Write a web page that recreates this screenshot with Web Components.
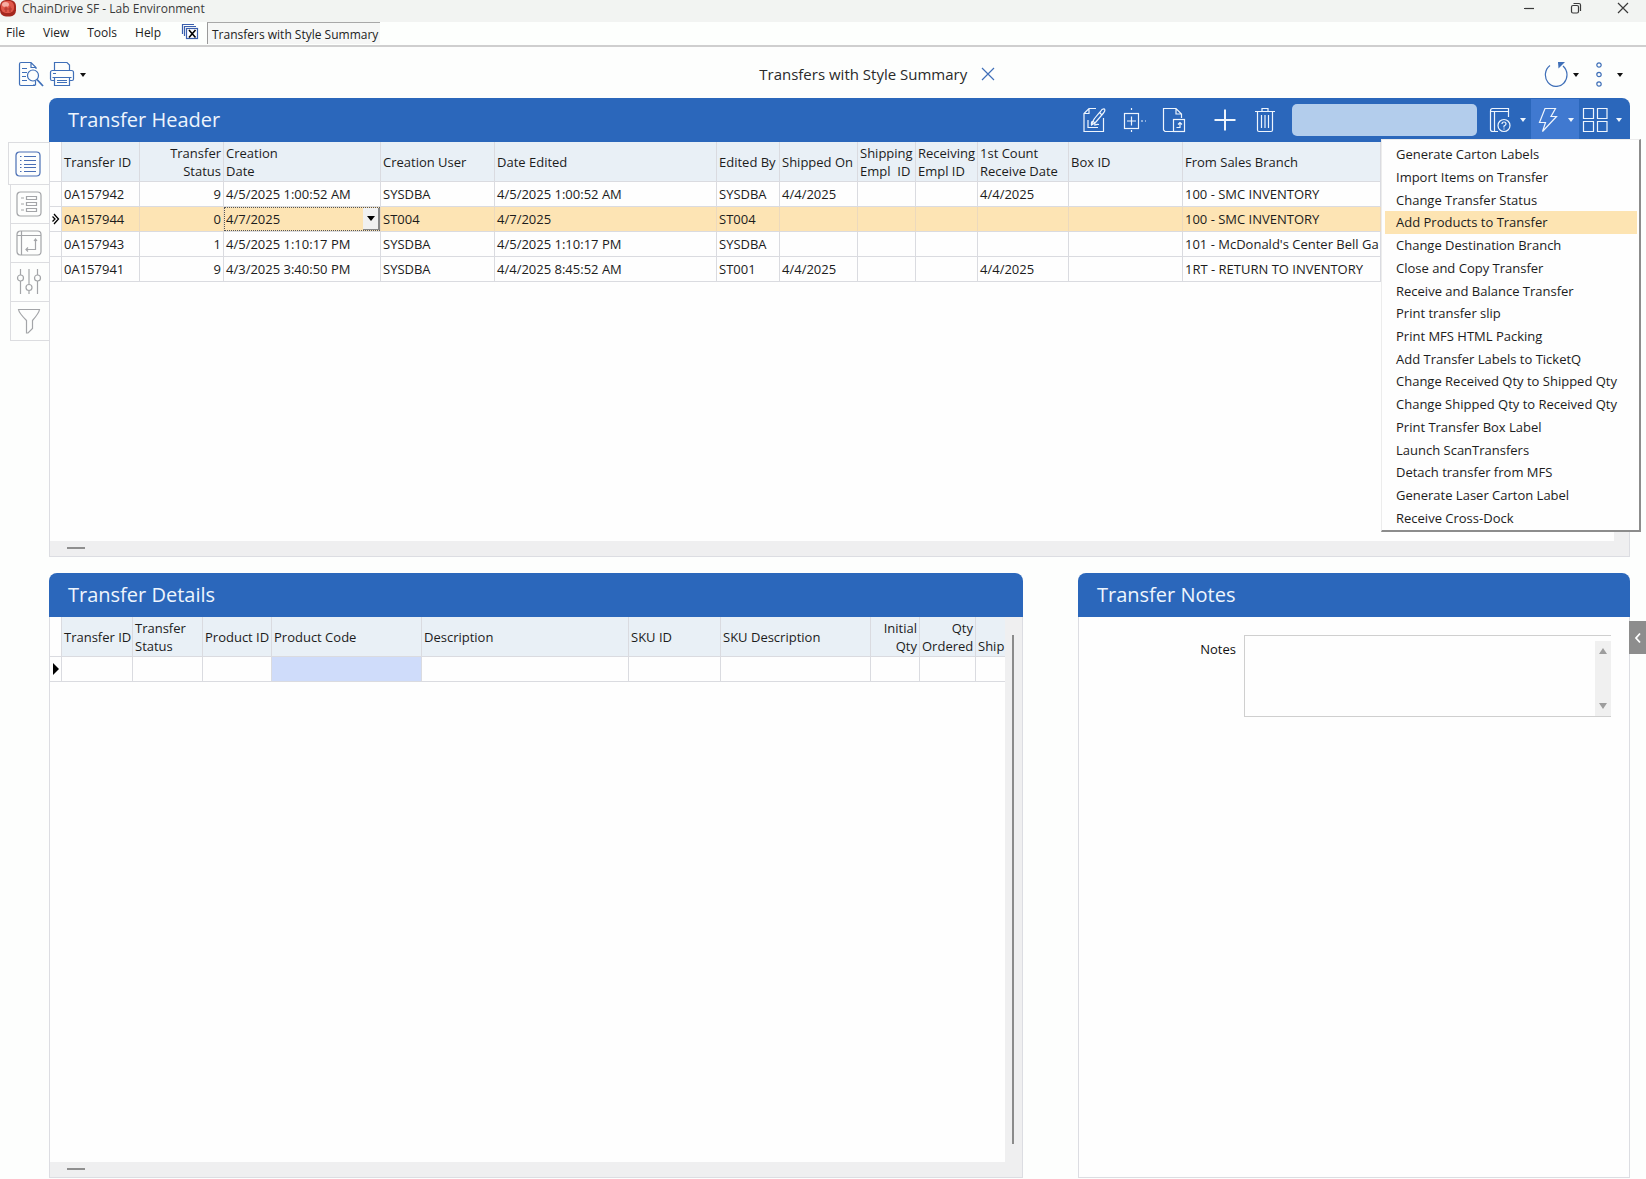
<!DOCTYPE html>
<html lang="en">
<head>
<meta charset="utf-8">
<title>ChainDrive SF - Lab Environment</title>
<style>
  html, body { margin: 0; height: 100%; }
  body { font: 13px/18px "Open Sans", "Noto Sans", sans-serif; color: #1c1c1c; background: #fdfefd; overflow: hidden; }
</style>
</head>
<body>
<chain-app></chain-app>
<script>
const RESET = `
  * { box-sizing: border-box; }
  button, input, textarea, select { font: inherit; color: inherit; margin: 0; border: 0; padding: 0; background: none; border-radius: 0; }
  button, a { cursor: default; }
  svg { display: block; flex: none; }
`;
const define = (name, html, setup) => customElements.define(name, class extends HTMLElement {
  connectedCallback() {
    if (this.shadowRoot) return;
    const t = document.createElement('template');
    t.innerHTML = `<style>${RESET}</style>` + html;
    this.attachShadow({ mode: 'open' }).append(t.content.cloneNode(true));
    if (setup) setup.call(this, this.shadowRoot);
  }
});

/* ---------- icons: [width, height, markup] ---------- */
const ICONS = {
  search: [26, 26, '<path d="M17 24.500H3Q1.500 24.500 1.500 23V3Q1.500 1.500 3 1.500H13L18 6.500V8M13 1.500V6.500H18" /><path d="M4 7.500H9M4 11.500H9M4 15.500H8M4 19.500H9M15 24H17.500V20"/><circle cx="15" cy="14.500" r="5.500"/><path d="M19 18.500L25 25" stroke-width="1.800"/>'],
  print: [26, 26, '<path d="M5.500 9V1.500H18L20.500 4V9M5.500 19.500H3Q1.500 19.500 1.500 18V11.500Q1.500 9.500 3.500 9.500H22.500Q24.500 9.500 24.500 11.500V18Q24.500 19.500 23 19.500H20.500M4 12.500H7"/><path d="M3.500 16.500H22.500M5.500 16.500V24.500H20.500V16.500M8 19.500H18M8 21.500H18"/>'],
  refresh: [24, 26, '<path d="M6 4.500A10.800 11.500 0 1 0 19 5"/><path d="M14 1H21L14.500 7.500Z" fill="currentColor" stroke="none"/>'],
  dots: [8, 26, '<circle cx="4" cy="4" r="2.200"/><circle cx="4" cy="13.500" r="2.200"/><circle cx="4" cy="23" r="2.200"/>'],
  close: [14, 14, '<path d="M1 1L13 13M13 1L1 13"/>'],
  edit: [24, 26, '<path d="M14 1.500H7L2 6.500V24.500H21.500V11M2 6.500H7V1.500M6 13V20.500H16"/><path d="M9.500 18C11 13 12 12 18.500 4.500Q20 1.500 22.500 2Q23.500 4 21.500 6L13.500 15.500L9.500 18Q9 14 11 14.500T13 18Q15 17 17 17.500M17.500 5.500L20 8"/>'],
  addbox: [24, 26, '<rect x="2.500" y="6.500" width="14" height="15"/><path d="M5 14H14M9.500 9.500V18.500"/><path d="M9.500 1V5M9.500 23V26M19 14H24" stroke-dasharray="2 2"/>'],
  doccopy: [24, 26, '<path d="M11 24.500H3L1.500 23V1.500H14L19.500 7V11M14 1.500V7H19.500"/><rect x="11.500" y="12.500" width="11" height="12"/><path d="M14.500 20.500H18V16M16 17.500L18 15.500L20 17.500"/>'],
  plus: [24, 26, '<path d="M12 2.500V23.500M1.500 13H22.500" stroke-width="2"/>'],
  trash: [24, 26, '<path d="M2 4.500H22M9 4V1.500H15V4M4.500 5V23Q4.500 24.500 6 24.500H18Q19.500 24.500 19.500 23V5M8.500 8V21M12 8V21M15.500 8V21"/>'],
  book: [26, 26, '<path d="M19.500 10V1.500H3.500Q1.500 1.500 1.500 4V22.500Q1.500 24.500 4 24.500H9M1.500 4.500H19.500M5.500 5V24M19.500 4.500V10"/><circle cx="15" cy="18.500" r="6"/><path d="M13 17Q13 15 15 15T17 17Q17 18 15 19V20.500M15 21.500V22.500"/>'],
  bolt: [22, 26, '<path d="M8 1.500H18.500L14 9.500H19.500L5.500 24.500L8.500 15.500H2.500Z"/>'],
  tiles: [26, 26, '<path d="M1.500 1.500H11.500V11.500H1.500ZM15.500 1.500H25V11.500H15.500ZM1.500 14.500H11.500V24.500H1.500ZM15.500 14.500H25V24.500H15.500Z"/>'],
  list: [26, 26, '<rect x="1" y="1" width="24" height="24" rx="3.500"/><path d="M9 5.500H21M9 9.500H21M9 13.500H21M9 16.500H21M9 20.500H21M5 5.500H6.500M5 9.500H6.500M5 13.500H6.500M5 16.500H6.500M5 20.500H6.500"/>'],
  form: [26, 26, '<rect x="1" y="1" width="24" height="24" rx="3.500"/><path d="M10.500 5.500H20.500V8.500H10.500ZM10.500 11.500H20.500V14.500H10.500ZM10.500 17.500H20.500V20.500H10.500ZM5 7H8M5 13H8M5 19H8"/>'],
  pivot: [26, 26, '<rect x="1" y="1" width="24" height="24" rx="3.500"/><path d="M1 5.500H25M5.500 1V25M10 19.500H19.500V9M18 11L19.500 9L21 11M12 17.500L10 19.500L12 21.500"/>'],
  sliders: [26, 26, '<path d="M4.500 0V6M4.500 12V25M13 0V15.500M13 21.500V25M21.500 0V6M21.500 12V25"/><circle cx="4.500" cy="9" r="3"/><circle cx="13" cy="18.500" r="3"/><circle cx="21.500" cy="9" r="3"/>'],
  funnel: [26, 26, '<path d="M2.500 1.500H23.500Q23 5 16.500 12.500V20.500L12 25H10.500V12.500Q3 5 2.500 1.500Z"/>'],
  windows: [18, 18, '<path d="M13 1.500H1.500V11M15 3.500H3.500V13" stroke="#3a5fae"/><rect x="5.500" y="5.500" width="11" height="10" fill="#fff" stroke="#3a5fae"/><path d="M8 7L14.500 14.500M14.500 7L8 14.500" stroke="#000" stroke-width="1.600"/>'],
  caret: [6, 4, '<path d="M0 0H6L3 4Z" fill="currentColor" stroke="none"/>'],
  min: [12, 12, '<path d="M1 6.500H11"/>'],
  restore: [12, 12, '<rect x="1.500" y="3.500" width="7" height="7.500" rx="1.500"/><path d="M3.500 1.500H9Q10.500 1.500 10.500 3V9"/>'],
  quit: [12, 12, '<path d="M1 1L11 11M11 1L1 11"/>'],
  left: [8, 12, '<path d="M6 1.500L2 6L6 10.500" stroke-width="1.800"/>'],
  logo: [16, 17, '<rect x="0" y="0" width="16" height="16.500" rx="6" fill="#a5281f" stroke="none"/><rect x="1" y="1" width="13" height="12" rx="5" fill="#e0574a" stroke="none"/><ellipse cx="5.500" cy="4.500" rx="3.500" ry="2.500" fill="#f6aea4" stroke="none"/><path d="M4 9H12M6 6.500V12M10 6.500V12" stroke="#b3392f"/>']
};
customElements.define('app-icon', class extends HTMLElement {
  connectedCallback() {
    if (this.shadowRoot) return;
    const [w, h, body] = ICONS[this.getAttribute('name')];
    this.attachShadow({ mode: 'open' }).innerHTML =
      `<style>:host{display:block;flex:none}svg{display:block}</style><svg width="${w}" height="${h}" viewBox="0 0 ${w} ${h}" fill="none" stroke="currentColor" stroke-width="1.200" aria-hidden="true">${body}</svg>`;
  }
});

/* ---------- window chrome ---------- */
define('title-bar', `
  <style>
    :host { display: flex; align-items: flex-start; height: 22px; background: #f2f4f2; color: #3a3a3a; font-size: 12px; }
    span { margin-left: 6px; flex: 1; }
    button { width: 47px; height: 16px; display: grid; place-items: center; }
  </style>
  <app-icon name="logo"></app-icon><span><slot></slot></span>
  <button aria-label="Minimize"><app-icon name="min"></app-icon></button>
  <button aria-label="Restore"><app-icon name="restore"></app-icon></button>
  <button aria-label="Close"><app-icon name="quit"></app-icon></button>
`);
define('menu-bar', `
  <style>
    :host { display: flex; height: 25px; background: #fdfffd; border-bottom: 2px solid #cfcfcf; color: #222; font-size: 12px; }
    nav { display: flex; gap: 18px; padding: 0 20px 2px 6px; align-items: center; }
    .tab { align-self: flex-start; height: 22px; padding: 2px 2px 0 4px; border-left: 1px solid #9a9a9a; border-top: 1px solid #a8a8a8; background: #f6f7f6; white-space: nowrap; }
    .win { padding: 0 8px 3px 0; display: grid; place-items: center; }
  </style>
  <nav aria-label="Main"><button>File</button><button>View</button><button>Tools</button><button>Help</button></nav>
  <button class="win" aria-label="Close all windows"><app-icon name="windows"></app-icon></button>
  <button class="tab">Transfers with Style Summary</button>
`);
define('page-bar', `
  <style>
    :host { display: grid; grid-template-columns: 7fr auto 6fr; align-items: center; height: 51px; padding-top: 2px; color: #3f6fb8; }
    div { display: flex; align-items: center; }
    button { display: flex; align-items: center; }
    .l { padding-left: 18px; gap: 5px; }
    .l .d, .r button { gap: 5px; }
    h1 { margin: 0 14px 0 0; font-size: 15px; line-height: 22px; font-weight: 400; color: #2a2a2a; white-space: nowrap; }
    .r { justify-content: flex-end; padding-right: 23px; gap: 16px; }
    .r .m { gap: 14px; }
    .k { color: #111; margin-top: 2px; }
  </style>
  <div class="l"><button aria-label="Preview"><app-icon name="search"></app-icon></button><button class="d" aria-label="Print"><app-icon name="print"></app-icon><app-icon class="k" name="caret"></app-icon></button></div>
  <div><h1><slot></slot></h1><button aria-label="Close view"><app-icon name="close"></app-icon></button></div>
  <div class="r"><button aria-label="Refresh"><app-icon name="refresh"></app-icon><app-icon class="k" name="caret"></app-icon></button><button class="m" aria-label="More"><app-icon name="dots"></app-icon><app-icon class="k" name="caret"></app-icon></button></div>
`);
define('side-rail', `
  <style>
    :host { display: flex; flex-direction: column; align-items: flex-end; width: 41px; padding-top: 44px; color: #a3a5a8; }
    button { width: 39px; height: 39px; padding-right: 2px; display: grid; place-items: center; border: 1px solid #dcdde0; border-width: 0 0 1px 1px; }
    button.on { width: 41px; height: 43px; border-top-width: 1px; color: #4a6fb5; }
  </style>
  <button class="on" aria-label="List"><app-icon name="list"></app-icon></button>
  <button aria-label="Form"><app-icon name="form"></app-icon></button>
  <button aria-label="Pivot"><app-icon name="pivot"></app-icon></button>
  <button aria-label="Settings"><app-icon name="sliders"></app-icon></button>
  <button aria-label="Filter"><app-icon name="funnel"></app-icon></button>
`);

/* ---------- panels ---------- */
define('app-panel', `
  <style>
    :host { display: flex; flex-direction: column; min-width: 0; min-height: 0; }
    header { display: flex; align-items: center; height: 44px; flex: none; padding: 0 3px 0 19px; background: #2b67bb; color: #eef5fd; border-radius: 8px 8px 0 0; }
    h2 { margin: 0; flex: 1; font-size: 20px; line-height: 28px; font-weight: 400; }
    section { flex: 1; min-height: 0; display: flex; flex-direction: column; border: 1px solid #dcdde2; border-top: 0; background: #fefefe; }
  </style>
  <header><h2></h2><slot name="tools"></slot></header>
  <section><slot></slot></section>
`, function (r) { r.querySelector('h2').textContent = this.getAttribute('heading'); });

define('action-menu', `
  <style>
    :host { display: block; width: 260px; padding: 3px 2px 1px 3px; background: #fefefe; border: 1px solid #ececec; border-right: 2px solid #8c8c8c; border-bottom: 2px solid #8c8c8c; color: #1c1c1c; }
    ul { margin: 0; padding: 0; list-style: none; display: grid; grid-auto-rows: 1fr; height: 386px; }
    button { display: block; width: 100%; height: 100%; padding-left: 11px; text-align: left; white-space: nowrap; }
    .on { background: #fde4b2; }
  </style><ul></ul>
`, function (r) {
  const items = ['Generate Carton Labels', 'Import Items on Transfer', 'Change Transfer Status', 'Add Products to Transfer', 'Change Destination Branch', 'Close and Copy Transfer', 'Receive and Balance Transfer', 'Print transfer slip', 'Print MFS HTML Packing', 'Add Transfer Labels to TicketQ', 'Change Received Qty to Shipped Qty', 'Change Shipped Qty to Received Qty', 'Print Transfer Box Label', 'Launch ScanTransfers', 'Detach transfer from MFS', 'Generate Laser Carton Label', 'Receive Cross-Dock'];
  r.querySelector('ul').innerHTML = items.map((t, i) => `<li><button${i === 3 ? ' class="on"' : ''}>${t}</button></li>`).join('');
});

define('header-tools', `
  <style>
    :host { display: flex; align-items: center; height: 44px; }
    button { height: 42px; }
    .i { width: 40px; display: grid; place-items: center; }
    .gap { margin-left: 11px; }
    input { width: 185px; height: 32px; margin: 0 6px 0 7px; padding: 0 8px; background: #b3cdec; border-radius: 5px; color: #1c1c1c; }
    .d { width: 48px; padding: 0 5px 0 6px; display: flex; align-items: center; justify-content: space-between; }
    .d.on { background: #4079d0; }
    .d.last { padding-left: 3px; }
    .wrap { position: relative; }
    action-menu { position: absolute; z-index: 5; right: -62px; top: 40px; }
  </style>
  <button class="i" aria-label="Edit"><app-icon name="edit"></app-icon></button>
  <button class="i" aria-label="Insert"><app-icon name="addbox"></app-icon></button>
  <button class="i" aria-label="Copy"><app-icon name="doccopy"></app-icon></button>
  <button class="i gap" aria-label="Add"><app-icon name="plus"></app-icon></button>
  <button class="i" aria-label="Delete"><app-icon name="trash"></app-icon></button>
  <input type="text" aria-label="Search">
  <button class="d" aria-label="Help"><app-icon name="book"></app-icon><app-icon name="caret"></app-icon></button>
  <div class="wrap"><button class="d on" aria-label="Actions"><app-icon name="bolt"></app-icon><app-icon name="caret"></app-icon></button><action-menu></action-menu></div>
  <button class="d last" aria-label="Layout"><app-icon name="tiles"></app-icon><app-icon name="caret"></app-icon></button>
`);

/* ---------- data grid ---------- */
const GRIDS = {
  header: {
    cols: [['', 12], ['Transfer ID', 78], ['Transfer<br>Status', 84, 1], ['Creation<br>Date', 157], ['Creation User', 114], ['Date Edited', 222], ['Edited By', 63], ['Shipped On', 78], ['Shipping<br>Empl&nbsp; ID', 58], ['Receiving<br>Empl ID', 62], ['1st Count<br>Receive Date', 91], ['Box ID', 114], ['From Sales Branch', 198], ['', 0]],
    rows: [
      ['', '0A157942', '9', '4/5/2025 1:00:52 AM', 'SYSDBA', '4/5/2025 1:00:52 AM', 'SYSDBA', '4/4/2025', '', '', '4/4/2025', '', '100 - SMC INVENTORY', ''],
      ['>', '0A157944', '0', '#4/7/2025', 'ST004', '4/7/2025', 'ST004', '', '', '', '', '', '100 - SMC INVENTORY', ''],
      ['', '0A157943', '1', '4/5/2025 1:10:17 PM', 'SYSDBA', '4/5/2025 1:10:17 PM', 'SYSDBA', '', '', '', '', '', "101 - McDonald's Center Bell Ga", ''],
      ['', '0A157941', '9', '4/3/2025 3:40:50 PM', 'SYSDBA', '4/4/2025 8:45:52 AM', 'ST001', '4/4/2025', '', '', '4/4/2025', '', '1RT - RETURN TO INVENTORY', '']
    ], selected: 1
  },
  details: {
    cols: [['', 12], ['Transfer ID', 71], ['Transfer<br>Status', 70], ['Product ID', 69], ['Product Code', 150], ['Description', 207], ['SKU ID', 92], ['SKU Description', 150], ['Initial<br>Qty', 49, 1], ['Qty<br>Ordered', 56, 1], ['<br>Ship', 0]],
    rows: [['|', '', '', '', '*', '', '', '', '', '', '']]
  }
};
const arrow = { '>': '<svg width="8" height="12"><path d="M2 1L6.500 6L2 11M0.500 3.500L3 6L0.500 8.500" fill="none" stroke="#000" stroke-width="1.300"/></svg>', '|': '<svg width="8" height="12"><path d="M1 0L7 6L1 12Z"/></svg>' };
define('data-grid', `
  <style>
    :host { display: grid; grid-template: 1fr 15px / 1fr var(--bar, 15px); flex: 1; min-height: 0; background: #efeff0; }
    .view { background: #fefefe; overflow: hidden; min-width: 0; }
    table { width: 100%; table-layout: fixed; border-collapse: separate; border-spacing: 0; }
    th, td { padding: 0 2px; border: 0 solid #dadbe0; border-width: 0 1px 1px 0; text-align: left; font-weight: 400; white-space: nowrap; overflow: hidden; }
    th { height: 40px; line-height: 18px; background: #e9f0f6; }
    th:first-child { background: #fefefe; }
    td { height: 25px; }
    th:last-child, td:last-child { border-right: 0; }
    td:first-child { padding: 0 0 0 2px; }
    .n { text-align: right; }
    .sel td:not(:first-child) { background: #fde4b4; border-right-color: #ecd9bd; }
    td.cur { background: #cfdcfa; }
    td.ed { padding: 0; }
    .combo { display: grid; grid-template-columns: 1fr 17px; height: 24px; border: 1px dotted #555; border-right: 0; }
    .combo select { appearance: none; grid-area: 1 / 1 / 2 / 3; padding-left: 1px; outline: 0; }
    .combo i { grid-area: 1 / 2; display: grid; place-items: center; background: #f1f1f1; border-right: 2px solid #888; border-bottom: 1px solid #888; pointer-events: none; z-index: 1; }
    .v { padding: 18px 8px 18px 0; display: flex; justify-content: flex-end; }
    .v span { width: 2px; background: #8b8b8b; }
    .h { grid-column: 1 / 3; padding: 6px 0 0 17px; }
    .h span { display: block; width: 18px; height: 2px; background: #8f8f8f; }
  </style>
  <div class="view"><table></table></div><div class="v"></div><div class="h"><span></span></div>
`, function (r) {
  const g = GRIDS[this.getAttribute('source')];
  const cell = (t, i) => {
    if (t[0] === '#') return `<td class="ed"><div class="combo"><select aria-label="Creation Date"><option>${t.slice(1)}</option></select><i><svg width="8" height="5"><path d="M0 0H8L4 5Z"/></svg></i></div></td>`;
    if (t === '*') return '<td class="cur"></td>';
    return `<td${g.cols[i][2] ? ' class="n"' : ''}>${arrow[t] || t}</td>`;
  };
  r.querySelector('table').innerHTML =
    `<colgroup>${g.cols.map(c => `<col${c[1] ? ` style="width:${c[1]}px"` : ''}>`).join('')}</colgroup>
     <thead><tr>${g.cols.map(c => `<th${c[2] ? ' class="n"' : ''}>${c[0]}</th>`).join('')}</tr></thead>
     <tbody>${g.rows.map((row, k) => `<tr${k === g.selected ? ' class="sel"' : ''}>${row.map(cell).join('')}</tr>`).join('')}</tbody>`;
  if (this.hasAttribute('vertical')) r.querySelector('.v').innerHTML = '<span></span>';
});

define('notes-form', `
  <style>
    :host { display: grid; grid-template-columns: 157px 1fr; column-gap: 8px; padding: 18px 18px 0 0; }
    label { text-align: right; padding-top: 5px; color: #111; }
    .box { display: grid; grid-template-columns: 1fr 16px; height: 82px; border: 1px solid #cfcfcf; border-right: 0; background: #fefefe; }
    textarea { resize: none; outline: 0; width: 100%; height: 100%; padding: 4px; }
    .bar { display: flex; flex-direction: column; justify-content: space-between; align-items: center; margin-top: 5px; padding: 7px 0; background: #f0f0f0; }
  </style>
  <label for="notes">Notes</label>
  <div class="box"><textarea id="notes"></textarea><div class="bar"><svg width="8" height="6"><path d="M0 6L4 0L8 6Z" fill="#9d9d9d"/></svg><svg width="8" height="6"><path d="M0 0L4 6L8 0Z" fill="#9d9d9d"/></svg></div></div>
`);

/* ---------- page ---------- */
define('chain-app', `
  <style>
    :host { display: flex; flex-direction: column; height: 100vh; }
    main { flex: 1; min-height: 0; display: flex; padding: 0 16px 1px 8px; position: relative; }
    .grid { flex: 1; min-width: 0; display: grid; grid-template-rows: 459fr 605fr; gap: 16px; }
    .row { display: grid; grid-template-columns: 974fr 552fr; gap: 55px; min-height: 0; }
    .lower { --bar: 17px; }
    .flyout { position: absolute; right: 0; top: 523px; width: 17px; height: 33px; background: #8d8d8d; color: #fff; display: grid; place-items: center; }
  </style>
  <title-bar>ChainDrive SF - Lab Environment</title-bar>
  <menu-bar></menu-bar>
  <page-bar>Transfers with Style Summary</page-bar>
  <main>
    <side-rail></side-rail>
    <div class="grid">
      <app-panel heading="Transfer Header"><header-tools slot="tools"></header-tools><data-grid source="header"></data-grid></app-panel>
      <div class="row">
        <app-panel class="lower" heading="Transfer Details"><data-grid source="details" vertical></data-grid></app-panel>
        <app-panel heading="Transfer Notes"><notes-form></notes-form></app-panel>
      </div>
    </div>
    <button class="flyout" aria-label="Expand side panel"><app-icon name="left"></app-icon></button>
  </main>
`);
</script>
</body>
</html>
